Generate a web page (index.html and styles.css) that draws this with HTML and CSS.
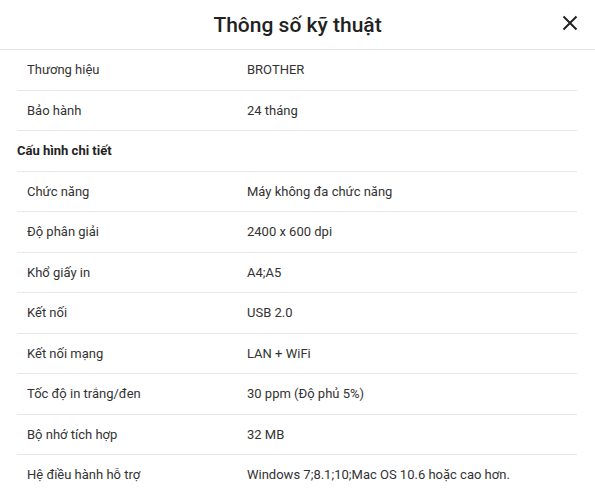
FILE: index.html
```html
<!DOCTYPE html>
<html lang="vi">
<head>
<meta charset="utf-8">
<link rel="stylesheet" href="styles.css">
</head>
<body>
<div class="modal">
  <div class="header">
    <h1 class="title">Thông số kỹ thuật</h1>
    <button class="close" aria-label="Đóng">
      <svg width="16" height="16" viewBox="0 0 16 16"><path d="M1.5 1.5 L14.5 14.5 M14.5 1.5 L1.5 14.5" stroke="#222" stroke-width="2" fill="none"/></svg>
    </button>
  </div>
  <div class="body">
    <div class="row"><div class="label">Thương hiệu</div><div class="value">BROTHER</div></div>
    <div class="row"><div class="label">Bảo hành</div><div class="value">24 tháng</div></div>
    <div class="group">Cấu hình chi tiết</div>
    <div class="row"><div class="label">Chức năng</div><div class="value">Máy không đa chức năng</div></div>
    <div class="row"><div class="label">Độ phân giải</div><div class="value">2400 x 600 dpi</div></div>
    <div class="row"><div class="label">Khổ giấy in</div><div class="value">A4;A5</div></div>
    <div class="row"><div class="label">Kết nối</div><div class="value">USB 2.0</div></div>
    <div class="row"><div class="label">Kết nối mạng</div><div class="value">LAN + WiFi</div></div>
    <div class="row"><div class="label">Tốc độ in trắng/đen</div><div class="value">30 ppm (Độ phủ 5%)</div></div>
    <div class="row"><div class="label">Bộ nhớ tích hợp</div><div class="value">32 MB</div></div>
    <div class="row"><div class="label">Hệ điều hành hỗ trợ</div><div class="value">Windows 7;8.1;10;Mac OS 10.6 hoặc cao hơn.</div></div>
  </div>
</div>
</body>
</html>
```
FILE: styles.css
```css
* { box-sizing: border-box; }
html, body { margin: 0; padding: 0; background: #fff; }
body { font-family: Roboto, "Noto Sans", sans-serif; color: #333; overflow: hidden; }
.modal { width: 595px; }
.header {
  height: 50px;
  border-bottom: 1px solid #e2e2e2;
  display: flex;
  align-items: center;
  justify-content: center;
  position: relative;
}
.title {
  margin: 0;
  font-size: 21px;
  font-weight: 500;
  color: #222;
  line-height: 24px;
  padding-top: 1px;
}
.close {
  position: absolute;
  right: 17px;
  top: 15px;
  width: 16px;
  height: 16px;
  padding: 0;
  border: 0;
  background: none;
  display: flex;
}
.body { padding: 0 18px 0 17px; }
.row {
  display: flex;
  border-bottom: 1px solid #e8e8e8;
  font-size: 13px;
  line-height: 15.5px;
  padding: 12px 0;
  height: 40.5px;
}
.label { width: 230px; padding-left: 10px; flex: none; }
.value { flex: 1; }
.group {
  font-size: 13px;
  font-weight: 700;
  color: #222;
  line-height: 15.5px;
  padding: 12px 0;
  height: 40.5px;
  border-bottom: 1px solid #e8e8e8;
}
```
